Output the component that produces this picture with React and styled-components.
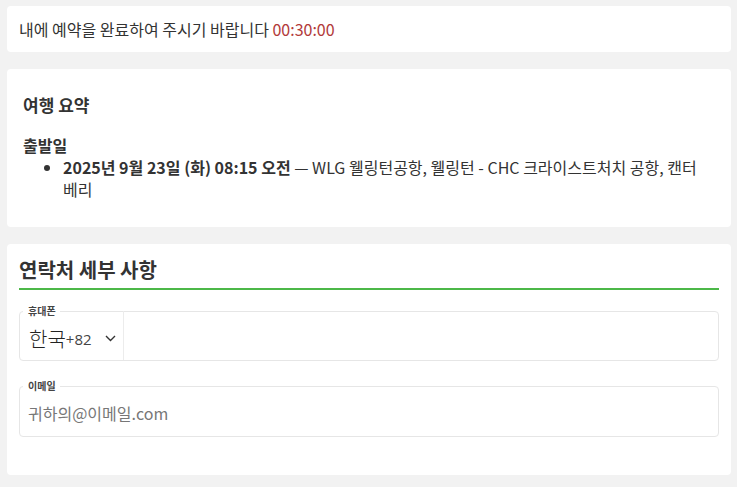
import React from 'react';
import styled, { createGlobalStyle } from 'styled-components';

const GlobalStyle = createGlobalStyle`
  html, body {
    margin: 0;
    padding: 0;
    background: #f2f2f2;
  }
  body {
    font-family: "Noto Sans CJK KR", "Noto Sans", sans-serif;
    color: #333;
  }
`;

const Page = styled.div`
  display: flex;
  flex-direction: column;
  gap: 17px;
  padding: 6px 6px 13px 7px;
`;

const Card = styled.section`
  background: #fff;
  border-radius: 4px;
  padding: ${(p) => p.$pad || '12px'};
`;

const Notice = styled.p`
  margin: 0;
  font-size: 16px;
  line-height: 22px;
  color: #333;
`;

const Timer = styled.span`
  color: #b23a3a;
`;

const SummaryTitle = styled.h3`
  margin: 4px 0 17px;
  font-size: 17px;
  line-height: 24px;
  font-weight: 700;
`;

const Label = styled.div`
  font-size: 16px;
  line-height: 22px;
  font-weight: 700;
`;

const List = styled.ul`
  margin: 0;
  padding: 0 12px 0 40px;
  font-size: 16px;
  line-height: 22px;
`;

const Strong = styled.b`
  font-weight: 700;
`;

const SectionTitle = styled.h2`
  margin: 0 0 14px;
  padding-bottom: 5px;
  font-size: 20px;
  line-height: 27px;
  font-weight: 700;
  border-bottom: 2px solid #4cb848;
`;

const Field = styled.fieldset`
  margin: 0 0 ${(p) => p.$mb || '18px'};
  padding: 0 0 4px;
  border: 1px solid #e6e6e6;
  border-radius: 4px;
  min-width: 0;
`;

const Legend = styled.legend`
  margin-left: 3px;
  padding: 0 4px 0 5px;
  font-size: 10px;
  line-height: 14px;
  font-weight: 700;
  color: #444;
`;

const PhoneRow = styled.div`
  display: flex;
  height: 38px;
`;

const Country = styled.div`
  display: flex;
  align-items: center;
  width: 104px;
  padding-left: 9px;
  box-sizing: border-box;
  border-right: 1px solid #ececec;
  margin-top: -7px;
  margin-bottom: -4px;
  padding-top: 6px;
`;

const CountryName = styled.span`
  font-size: 20px;
  font-weight: 300;
  color: #222;
`;

const Code = styled.span`
  font-family: "Open Sans", sans-serif;
  font-size: 15px;
  color: #444;
`;

const Chevron = styled.svg`
  margin-left: 13px;
  width: 11px;
  height: 7px;
`;

const Input = styled.input`
  flex: 1;
  border: none;
  outline: none;
  background: transparent;
  font-family: "Noto Sans CJK KR", "Noto Sans", sans-serif;
  font-size: 16px;
  color: #333;
  padding: 0 8px;
  height: ${(p) => p.$h || '38px'};
  width: 100%;
  box-sizing: border-box;
  &::placeholder {
    color: #777;
  }
`;

export default function App() {
  return (
    <>
      <GlobalStyle />
      <Page>
        <Card>
          <Notice>
            내에 예약을 완료하여 주시기 바랍니다 <Timer>00:30:00</Timer>
          </Notice>
        </Card>

        <Card $pad="20px 16px 27px">
          <SummaryTitle>여행 요약</SummaryTitle>
          <Label>출발일</Label>
          <List>
            <li>
              <Strong>2025년 9월 23일 (화) 08:15 오전</Strong> — WLG 웰링턴공항, 웰링턴 - CHC 크라이스트처치 공항, 캔터베리
            </li>
          </List>
        </Card>

        <Card $pad="12px 12px 38px">
          <SectionTitle>연락처 세부 사항</SectionTitle>
          <Field>
            <Legend>휴대폰</Legend>
            <PhoneRow>
              <Country>
                <CountryName>한국</CountryName>
                <Code>+82</Code>
                <Chevron viewBox="0 0 11 7">
                  <polyline points="1,1 5.5,5.5 10,1" fill="none" stroke="#333" strokeWidth="1.4" />
                </Chevron>
              </Country>
              <Input type="tel" />
            </PhoneRow>
          </Field>
          <Field $mb="0">
            <Legend>이메일</Legend>
            <Input type="email" placeholder="귀하의@이메일.com" $h="39px" />
          </Field>
        </Card>
      </Page>
    </>
  );
}
